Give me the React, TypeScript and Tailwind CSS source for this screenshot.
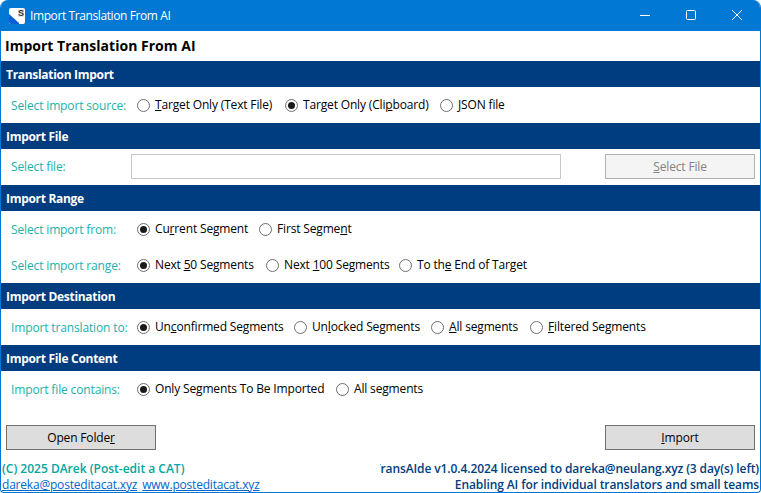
const FONT = "font-['Open_Sans','Noto_Sans',sans-serif]";

function Radio({ checked, width, children }: { checked?: boolean; width: string; children: React.ReactNode }) {
  return (
    <div className={`flex items-center shrink-0 ${width}`}>
      <span className="flex items-center justify-center w-[13px] h-[13px] rounded-full border border-[#6f6f6f] bg-white shrink-0">
        {checked && <span className="block w-[7px] h-[7px] rounded-full bg-[#1a1a1a]" />}
      </span>
      <span className="ml-[5px] text-[12px] leading-4 text-black whitespace-nowrap tracking-[-0.16px]">{children}</span>
    </div>
  );
}

function Band({ title }: { title: string }) {
  return (
    <div className="h-[26px] shrink-0 bg-[#003d80] flex items-center pl-[5px] pt-[2px] text-[12px] font-bold text-white tracking-[-0.3px]">
      {title}
    </div>
  );
}

function Label({ children }: { children: React.ReactNode }) {
  return (
    <div className="w-[116px] mr-[10px] shrink-0 overflow-hidden whitespace-nowrap text-[12px] leading-4 text-[#20b2aa] pt-px tracking-[-0.14px]">
      {children}
    </div>
  );
}

function Row({ label, children }: { label: string; children: React.ReactNode }) {
  return (
    <div className="flex items-center pl-[10px] h-[36px] shrink-0">
      <Label>{label}</Label>
      {children}
    </div>
  );
}

export default function App() {
  return (
    <div className={`w-[761px] h-[493px] overflow-hidden bg-white ${FONT}`}>
      <div className="h-full flex flex-col border-x border-b border-[#0078d4] rounded-t-[8px] rounded-b-[4px] overflow-hidden bg-white">
        {/* Title bar */}
        <div className="h-[31px] -mx-px bg-[#0078d4] flex items-center shrink-0 text-white">
          <svg className="ml-[9px] w-[16px] h-[16px]" viewBox="0 0 16 16">
            <rect width="16" height="16" rx="2" fill="#fff" />
            <path d="M0 6 L10 15 L10 16 L2 16 Q0 16 0 14 Z" fill="#0a5ed7" />
            <rect x="9" y="1" width="6" height="8" rx="1" fill="#e6e6e6" />
            <text x="12" y="8" fontSize="9" fontWeight="700" textAnchor="middle" fill="#333" fontFamily="Liberation Sans">S</text>
          </svg>
          <span className="ml-[5px] text-[12px] tracking-[-0.4px]">Import Translation From AI</span>
          <div className="ml-auto flex items-center">
            <svg className="w-[46px] h-[31px]" viewBox="0 0 46 31" stroke="#fff" fill="none"><path d="M18 15.5H28" /></svg>
            <svg className="w-[46px] h-[31px]" viewBox="0 0 46 31" stroke="#fff" fill="none"><rect x="18.5" y="10.5" width="9" height="9" rx="1" /></svg>
            <svg className="w-[46px] h-[31px] mr-[1px]" viewBox="0 0 46 31" stroke="#fff" fill="none"><path d="M18 10L28 20M28 10L18 20" /></svg>
          </div>
        </div>

        {/* Heading */}
        <div className="h-[30px] shrink-0 flex items-center pl-[4px] pb-[2px] text-[14px] font-bold text-black tracking-[0.02px]">
          Import Translation From AI
        </div>

        <Band title="Translation Import" />
        <Row label="Select import source:">
          <Radio width="w-[148px]"><u>T</u>arget Only (Text File)</Radio>
          <Radio checked width="w-[155px]">Target Only (Cli<u>p</u>board)</Radio>
          <Radio width="w-[100px]"><u>J</u>SON file</Radio>
        </Row>

        <Band title="Import File" />
        <div className="h-[36px] shrink-0 flex items-center pl-[10px] pb-px">
          <div className="flex items-center w-[120px] pt-px text-[12px] text-[#20b2aa] tracking-[-0.14px]">Select file:</div>
          <div className="w-[430px] h-[25px] border border-[#c8c8c8] bg-white" />
          <div className="ml-[44px] w-[150px] h-[25px] pt-px border border-[#adb2b5] bg-[#f4f4f4] flex items-center justify-center text-[12px] text-[#838383] tracking-[-0.16px]">
            <span><u>S</u>elect File</span>
          </div>
        </div>

        <Band title="Import Range" />
        <Row label="Select import from:">
          <Radio checked width="w-[122px]">Cu<u>r</u>rent Segment</Radio>
          <Radio width="w-[110px]">First Segme<u>n</u>t</Radio>
        </Row>
        <Row label="Select import range:">
          <Radio checked width="w-[129px]">Next <u>5</u>0 Segments</Radio>
          <Radio width="w-[133px]">Next <u>1</u>00 Segments</Radio>
          <Radio width="w-[140px]">To th<u>e</u> End of Target</Radio>
        </Row>

        <Band title="Import Destination" />
        <Row label="Import translation to:">
          <Radio checked width="w-[157px]">Un<u>c</u>onfirmed Segments</Radio>
          <Radio width="w-[137px]">Un<u>l</u>ocked Segments</Radio>
          <Radio width="w-[99px]"><u>A</u>ll segments</Radio>
          <Radio width="w-[130px]"><u>F</u>iltered Segments</Radio>
        </Row>

        <Band title="Import File Content" />
        <Row label="Import file contains:">
          <Radio checked width="w-[199px]">Only Segments To Be Imported</Radio>
          <Radio width="w-[100px]">All segments</Radio>
        </Row>

        {/* Actions */}
        <div className="mt-[18px] px-[5px] flex justify-between shrink-0">
          <div className="w-[150px] h-[25px] pt-px border border-[#707070] bg-[#dddddd] flex items-center justify-center text-[12px] text-black tracking-[-0.16px]">
            <span>Open Folde<u>r</u></span>
          </div>
          <div className="w-[150px] h-[25px] pt-px border border-[#707070] bg-[#dddddd] flex items-center justify-center text-[12px] text-black tracking-[-0.16px]">
            <span><u>I</u>mport</span>
          </div>
        </div>

        {/* Footer */}
        <div className="mt-[11px] shrink-0 h-[32px] flex text-[12px] leading-4 font-semibold">
          <div className="w-[379px] shrink-0 pl-px">
            <div className="text-[#00a6a0] tracking-[0px]">(C) 2025 DArek (Post-edit a CAT)</div>
            <div className="flex gap-[5px] font-normal text-[#0066cc] underline tracking-[-0.2px]">
              <span>dareka@posteditacat.xyz</span>
              <span>www.posteditacat.xyz</span>
            </div>
          </div>
          <div className="flex-1 min-w-0 overflow-hidden flex flex-col items-end pr-[1px] text-[#003d80] tracking-[-0.1px]">
            <div className="whitespace-nowrap">TransAIde v1.0.4.2024 licensed to dareka@neulang.xyz (3 day(s) left)</div>
            <div className="whitespace-nowrap">Enabling AI for individual translators and small teams</div>
          </div>
        </div>
      </div>
    </div>
  );
}
